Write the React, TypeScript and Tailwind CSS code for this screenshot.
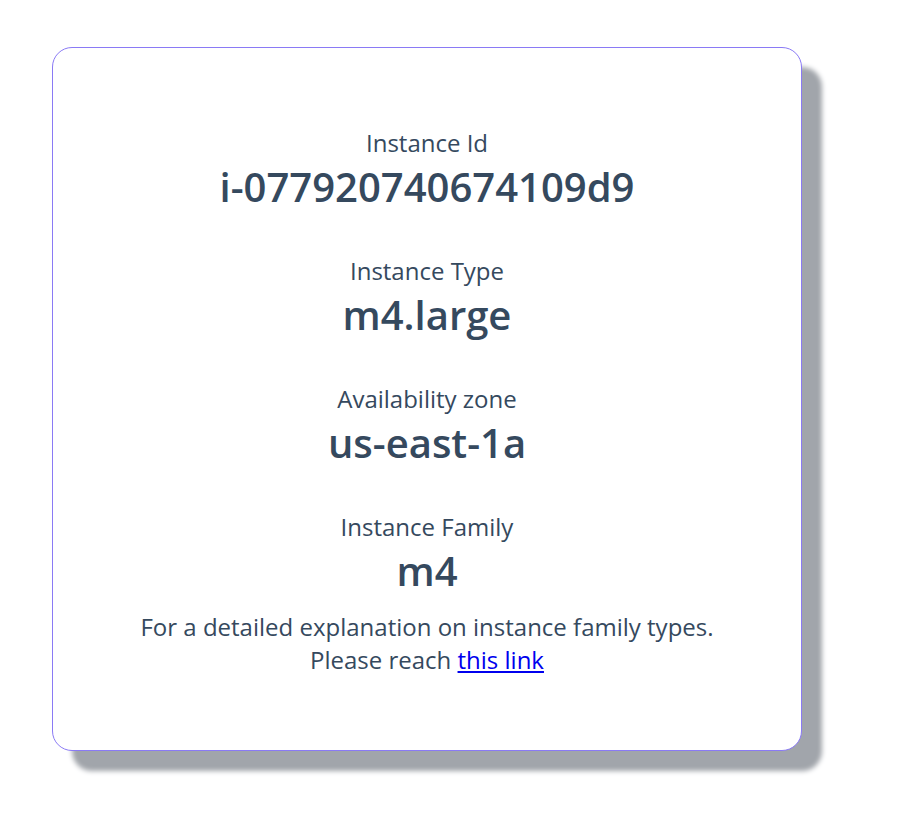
const fields = [
  { label: 'Instance Id', value: 'i-077920740674109d9' },
  { label: 'Instance Type', value: 'm4.large' },
  { label: 'Availability zone', value: 'us-east-1a' },
  { label: 'Instance Family', value: 'm4' },
]

export default function App() {
  return (
    <div
      className="min-h-[835px] bg-white text-[#35495e]"
      style={{ fontFamily: '"Open Sans", "Noto Sans", sans-serif' }}
    >
      <div className="pt-[47px] pl-[52px]">
        <div className="w-[750px] h-[704px] rounded-[20px] border border-[#8a7af5] bg-white shadow-[20px_20px_5px_#a1a5ab] pt-[77px] flex flex-col items-center text-center">
          <div className="flex flex-col gap-[40px]">
            {fields.map((f) => (
              <div key={f.label} className="flex flex-col items-center">
                <div className="text-[24px] leading-[36px]">{f.label}</div>
                <div className="text-[40px] leading-[52px] font-semibold">{f.value}</div>
              </div>
            ))}
          </div>
          <p className="mt-[13px] text-[24px] leading-[33px]">
            For a detailed explanation on instance family types.
            <br />
            Please reach{' '}
            <a href="#" className="text-[#0000ee] underline">
              this link
            </a>
          </p>
        </div>
      </div>
    </div>
  )
}
